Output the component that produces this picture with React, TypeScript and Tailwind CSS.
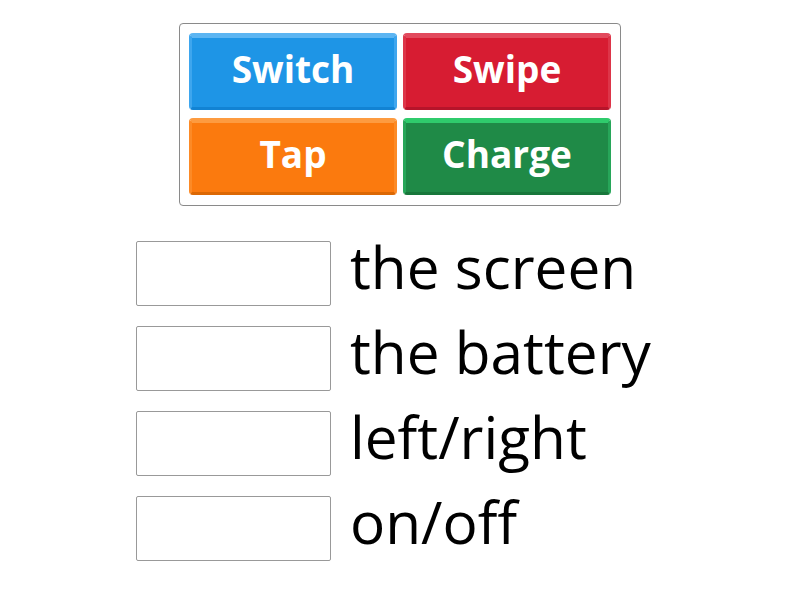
import React from 'react';

const tiles = [
  { label: 'Switch', cls: 'bg-[#1e95e6] border-t-[#5cb5f2] border-x-[#3ea6ee] border-b-[#1283d3]' },
  { label: 'Swipe', cls: 'bg-[#d71c32] border-t-[#e24a5d] border-x-[#dd3549] border-b-[#b6142a]' },
  { label: 'Tap', cls: 'bg-[#fb7a0e] border-t-[#fd9b40] border-x-[#fc8a26] border-b-[#dc6804]' },
  { label: 'Charge', cls: 'bg-[#1f8a47] border-t-[#2fcb6c] border-x-[#27a659] border-b-[#18773b]' },
];

const rows = ['the screen', 'the battery', 'left/right', 'on/off'];

export default function App() {
  return (
    <div className="w-[800px] h-[600px] bg-white font-['Open_Sans',sans-serif] overflow-hidden">
      <div className="pt-[23px] flex justify-center">
        <div className="w-[442px] h-[183px] border border-[#8a8a8a] rounded-[4px] pt-[9px] pl-[9px] grid grid-cols-[208px_208px] grid-rows-[77px_77px] gap-x-[6px] gap-y-[8px]">
          {tiles.map((t) => (
            <div
              key={t.label}
              className={`${t.cls} border-[3px] border-t-[5px] rounded-[4px] flex items-center justify-center text-white font-bold text-[37px] leading-none pb-[9px]`}
            >
              {t.label}
            </div>
          ))}
        </div>
      </div>
      <div className="ml-[136px] mt-[35px] flex flex-col gap-[20px]">
        {rows.map((r) => (
          <div key={r} className="flex items-center h-[65px]">
            <div className="w-[195px] h-[65px] border border-[#999] rounded-[2px] bg-white shrink-0" />
            <span className="ml-[19px] text-[58.5px] leading-none text-black whitespace-nowrap pb-[14px]">{r}</span>
          </div>
        ))}
      </div>
    </div>
  );
}
